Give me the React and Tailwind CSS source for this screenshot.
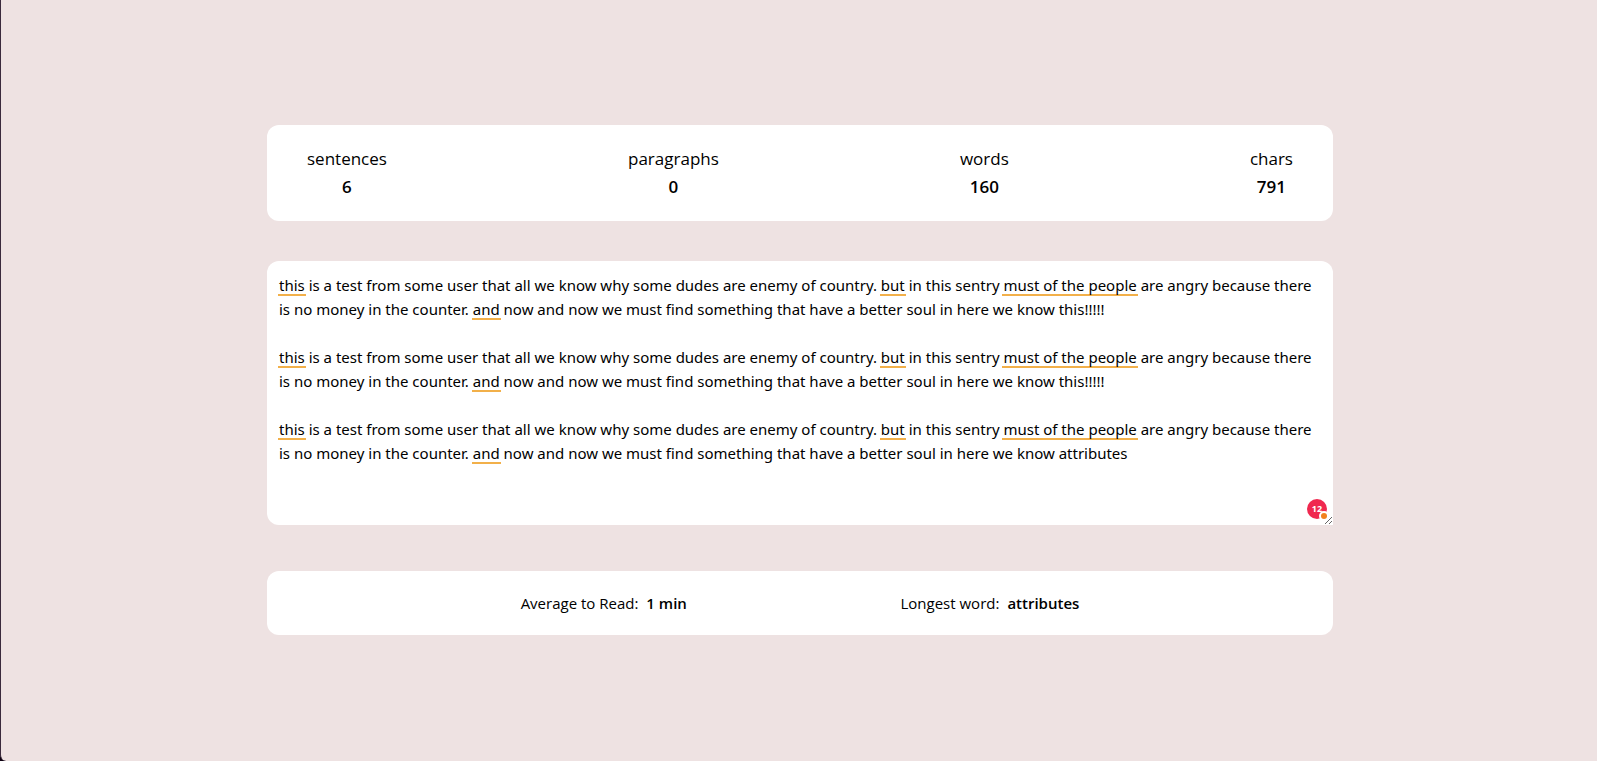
import { Fragment, useState } from "react";

const opening =
  "this is a test from some user that all we know why some dudes are enemy of country. but in this sentry must of the people are angry because there is no money in the counter. and now and now we must find something that have a better soul in here we know ";

const initialText = [
  opening + "this!!!!!",
  opening + "this!!!!!",
  opening + "attributes",
].join("\n\n");

const stats = [
  { label: "sentences", value: 6 },
  { label: "paragraphs", value: 0 },
  { label: "words", value: 160 },
  { label: "chars", value: 791 },
];

// Phrases flagged by the writing checker: sentence openings and one wrong phrase.
const flagged = /(^this|(?<=\. )but|must of the people|(?<=\. )and)/gm;

function MarkedText({ text }) {
  return text.split(flagged).map((part, i) =>
    i % 2 ? (
      <span
        key={i}
        className="-mx-px inline-block h-[23px] border-b-2 border-[#f2b04a] px-px align-top"
      >
        {part}
      </span>
    ) : (
      <Fragment key={i}>{part}</Fragment>
    ),
  );
}

function Stat({ label, value }) {
  return (
    <div className="flex flex-col items-center text-[17px] leading-7">
      <dt>{label}</dt>
      <dd className="font-semibold">{value}</dd>
    </div>
  );
}

function Detail({ label, value }) {
  return (
    <div className="flex gap-2">
      <dt>{label}</dt>
      <dd className="font-semibold">{value}</dd>
    </div>
  );
}

export default function App() {
  const [text, setText] = useState(initialText);

  return (
    <div className="bg-[#0d0010]">
      <main className="flex min-h-screen flex-col items-center justify-center rounded-bl-md border-l border-[#3a2a3c] bg-[#eee2e2] pb-0.5 pl-0.5 font-['Open_Sans','Noto_Sans',sans-serif] text-[15px] leading-6 text-black">
        <div className="flex w-full max-w-[1066px] flex-col">
          <dl className="flex justify-between rounded-xl bg-white px-10 py-5">
            {stats.map((s) => (
              <Stat key={s.label} {...s} />
            ))}
          </dl>

          <div className="relative mt-10 grid rounded-l-xl rounded-tr-xl bg-white font-['Noto_Sans','Open_Sans',sans-serif]">
            {/* The marked copy is what shows; the field above it takes the typing. */}
            <div
              aria-hidden="true"
              className="col-start-1 row-start-1 p-3 whitespace-pre-wrap"
            >
              <MarkedText text={text} />
            </div>
            <textarea
              aria-label="Text to analyse"
              spellCheck={false}
              rows={10}
              value={text}
              onChange={(e) => setText(e.target.value)}
              className="relative col-start-1 row-start-1 block w-full resize-y overflow-hidden bg-transparent p-3 text-transparent caret-black outline-none"
            />
            <div className="pointer-events-none absolute right-1.5 bottom-1.5 flex size-5 items-center justify-center rounded-full bg-[#f0284f] text-[9px] leading-none font-bold text-white">
              12
              <span className="absolute right-0 bottom-0 size-1.5 rounded-full bg-[#f2811d] ring-2 ring-white" />
            </div>
          </div>

          <dl className="mt-[46px] flex justify-evenly rounded-xl bg-white px-10 py-5">
            <Detail label="Average to Read:" value="1 min" />
            <Detail label="Longest word:" value="attributes" />
          </dl>
        </div>
      </main>
    </div>
  );
}
